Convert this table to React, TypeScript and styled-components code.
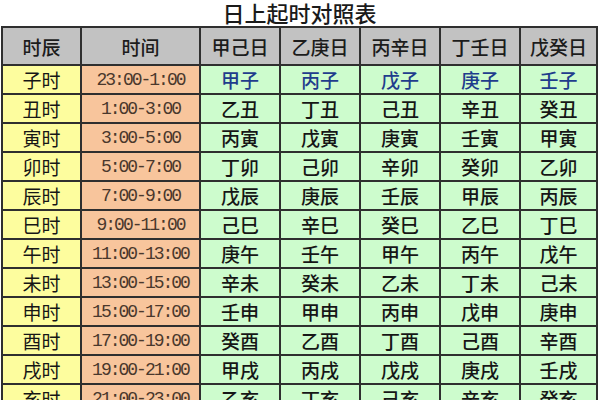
import React from 'react';
import styled, { createGlobalStyle } from 'styled-components';

const GlobalStyle = createGlobalStyle`
  html, body {
    margin: 0;
    padding: 0;
    background: #fff;
    overflow: hidden;
  }
  body {
    font-family: "Noto Sans CJK SC", "Noto Sans", sans-serif;
  }
`;

const headers = ['时辰', '时间', '甲己日', '乙庚日', '丙辛日', '丁壬日', '戊癸日'];

const rows: string[][] = [
  ['子时', '23:00-1:00', '甲子', '丙子', '戊子', '庚子', '壬子'],
  ['丑时', '1:00-3:00', '乙丑', '丁丑', '己丑', '辛丑', '癸丑'],
  ['寅时', '3:00-5:00', '丙寅', '戊寅', '庚寅', '壬寅', '甲寅'],
  ['卯时', '5:00-7:00', '丁卯', '己卯', '辛卯', '癸卯', '乙卯'],
  ['辰时', '7:00-9:00', '戊辰', '庚辰', '壬辰', '甲辰', '丙辰'],
  ['巳时', '9:00-11:00', '己巳', '辛巳', '癸巳', '乙巳', '丁巳'],
  ['午时', '11:00-13:00', '庚午', '壬午', '甲午', '丙午', '戊午'],
  ['未时', '13:00-15:00', '辛未', '癸未', '乙未', '丁未', '己未'],
  ['申时', '15:00-17:00', '壬申', '甲申', '丙申', '戊申', '庚申'],
  ['酉时', '17:00-19:00', '癸酉', '乙酉', '丁酉', '己酉', '辛酉'],
  ['戌时', '19:00-21:00', '甲戌', '丙戌', '戊戌', '庚戌', '壬戌'],
  ['亥时', '21:00-23:00', '乙亥', '丁亥', '己亥', '辛亥', '癸亥'],
];

type Kind = 'hour' | 'time' | 'pillar';

const App: React.FC = () => {
  return (
    <Page>
      <GlobalStyle />
      <Title>日上起时对照表</Title>
      <Grid>
        {headers.map((h) => (
          <HeadCell key={h}>{h}</HeadCell>
        ))}
        {rows.map((r, ri) =>
          r.map((c, ci) => {
            const kind: Kind = ci === 0 ? 'hour' : ci === 1 ? 'time' : 'pillar';
            return (
              <Cell key={`${ri}-${ci}`} $kind={kind} $first={ri === 0}>
                {c}
              </Cell>
            );
          })
        )}
      </Grid>
    </Page>
  );
};

export default App;

const Page = styled.div`
  width: 600px;
  height: 400px;
  overflow: hidden;
  display: flex;
  flex-direction: column;
  padding-left: 1px;
  box-sizing: border-box;
`;

const Title = styled.div`
  height: 28px;
  display: flex;
  align-items: center;
  justify-content: center;
  font-size: 22px;
  line-height: 24px;
  font-weight: 500;
  color: #1a1a1a;
  padding: 0 2px 2px 0;
  box-sizing: border-box;
`;

const Grid = styled.div`
  width: 597px;
  box-sizing: border-box;
  display: grid;
  grid-template-columns: 77px 117px 78px 78px 78px 78px 75px;
  grid-template-rows: 36px;
  grid-auto-rows: 27px;
  gap: 2px;
  padding: 2px;
  background: #2f2f2f;
`;

const HeadCell = styled.div`
  background: #c2c2c2;
  display: flex;
  align-items: center;
  justify-content: center;
  font-size: 19px;
  font-weight: 500;
  color: #1c1c1c;
`;

const bg: Record<Kind, string> = {
  hour: '#fdfd9e',
  time: '#f8c59c',
  pillar: '#cdfccd',
};

const Cell = styled.div<{ $kind: Kind; $first: boolean }>`
  background: ${({ $kind }) => bg[$kind]};
  display: flex;
  align-items: center;
  justify-content: center;
  line-height: 1;
  font-size: ${({ $kind }) => ($kind === 'time' ? '18px' : '19px')};
  font-family: ${({ $kind }) =>
    $kind === 'time'
      ? '"Liberation Mono", monospace'
      : '"Noto Sans CJK SC", sans-serif'};
  letter-spacing: ${({ $kind }) => ($kind === 'time' ? '-2px' : '0')};
  font-weight: ${({ $kind }) => ($kind === 'pillar' ? 500 : 400)};
  color: ${({ $kind, $first }) =>
    $kind === 'time'
      ? '#4a382c'
      : $kind === 'pillar' && $first
      ? '#1f3d8c'
      : '#161616'};
`;
